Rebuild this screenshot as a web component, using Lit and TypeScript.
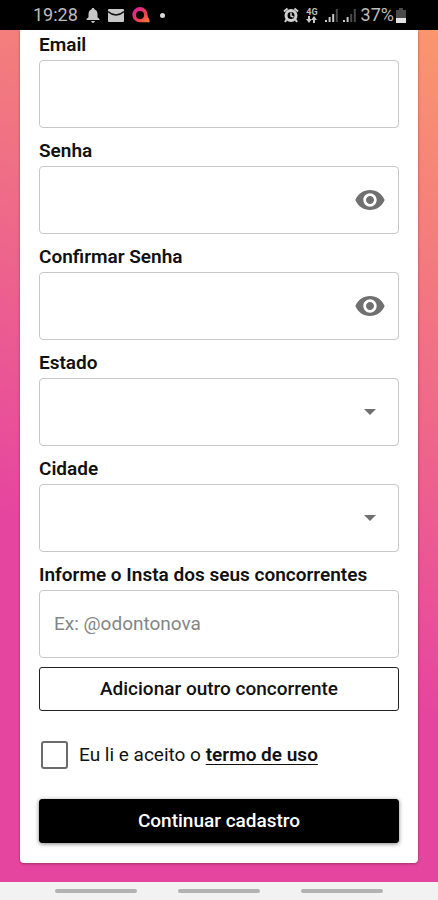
import { LitElement, html, css, svg } from "lit";
import { customElement, state } from "lit/decorators.js";

@customElement("status-bar")
class StatusBar extends LitElement {
  static styles = css`
    :host {
      display: flex;
      justify-content: space-between;
      align-items: center;
      height: 30px;
      padding: 0 32px 0 33px;
      background: #000;
      color: #bdbdbd;
      font-size: 18px;
      line-height: 30px;
    }
    .group {
      display: flex;
      align-items: center;
    }
    .left { gap: 8px; }
    .right { gap: 5px; }
    svg { display: block; }
    .network {
      display: flex;
      flex-direction: column;
      align-items: center;
      margin: 0 2px;
      font-size: 9px;
      font-weight: 700;
      line-height: 8px;
    }
    .dot {
      width: 5px;
      height: 5px;
      margin-left: 2px;
      border-radius: 50%;
      background: #d8d8d8;
    }
    .power {
      display: flex;
      align-items: center;
      gap: 2px;
    }
  `;

  private signal(level: number) {
    const heights = [2, 5, 8, 13];
    return html`<svg width="13" height="13" viewBox="0 0 13 13" aria-hidden="true">
      ${heights.map(
        (h, i) => svg`<rect x=${i * 3.6} y=${13 - h} width="2" height=${h} fill=${i < level ? "#c8c8c8" : "#4a4a4a"} />`
      )}
    </svg>`;
  }

  render() {
    return html`
      <div class="group left">
        <span>19:28</span>
        <svg width="14" height="16" viewBox="0 0 14 16" fill="#c8c8c8" aria-hidden="true">
          <path d="M7 1c.8 0 1.300.5 1.300 1.200C10.500 2.900 11.500 4.800 11.500 7v3.200L13.500 12v1H.5v-1l2-1.800V7c0-2.200 1-4.100 3.200-4.800C5.700 1.500 6.200 1 7 1zM5.200 14h3.600c0 1-.8 1.800-1.800 1.800S5.200 15 5.200 14z" />
        </svg>
        <svg width="16" height="13" viewBox="0 0 16 13" aria-hidden="true">
          <rect width="16" height="13" rx="1" fill="#c8c8c8" />
          <path d="M0 2.500C4.500 7 11.500 7 16 2.500" fill="none" stroke="#111" stroke-width="1.500" />
        </svg>
        <svg width="18" height="16" viewBox="0 0 18 16" fill="none" aria-hidden="true">
          <defs>
            <linearGradient id="ring" x1="0" y1="0" x2="1" y2="1">
              <stop offset="0.2" stop-color="#e0268a" />
              <stop offset="0.6" stop-color="#ef3f52" />
              <stop offset="1" stop-color="#f78a2c" />
            </linearGradient>
          </defs>
          <path fill="url(#ring)" fill-rule="evenodd" d="M8 0a7.500 7.500 0 0 1 7.500 7.500c0 1.700.4 2.900 1.700 4.500l.4 2.500c0 .5-.3.8-.8.8H8A7.600 7.600 0 0 1 8 0zM8 4a4 4 0 1 0 0 8a4 4 0 0 0 0-8z" />
        </svg>
        <span class="dot"></span>
      </div>
      <div class="group right">
        <svg width="16" height="16" viewBox="0 0 16 16" fill="none" stroke="#d0d0d0" aria-hidden="true">
          <circle cx="8" cy="8.500" r="5" stroke-width="3" />
          <path d="M1 4.500L4.500 1.500M15 4.500L11.500 1.500M3.500 12.500L2 15M12.500 12.500L14 15" stroke-width="2" />
          <path d="M8 5.500V9l2.500 1" stroke-width="1.500" />
        </svg>
        <span class="network">
          <span>4G</span>
          <svg width="11" height="7" viewBox="0 0 11 7" fill="#c8c8c8" aria-hidden="true">
            <path d="M2 0h2v3h2L3 7 0 3h2zM7 7h2V4h2L8 0 5 4h2z" />
          </svg>
        </span>
        ${this.signal(3)} ${this.signal(2)}
        <span class="power">
          <span>37%</span>
          <svg width="10" height="15" viewBox="0 0 10 15" aria-hidden="true">
            <path d="M3 0h4v2h3v13H0V2h3z" fill="#4a4a4a" />
            <path d="M0 10h10v5H0z" fill="#e4e4e4" />
          </svg>
        </span>
      </div>
    `;
  }
}

@customElement("app-root")
class AppRoot extends LitElement {
  @state() private visible: Record<string, boolean> = {};

  static styles = css`
    :host {
      display: flex;
      flex-direction: column;
      min-height: 100vh;
      font-family: Roboto, "Liberation Sans", sans-serif;
      color: #111;
    }
    * { box-sizing: border-box; }
    main {
      flex: 1;
      padding: 0 20px 19px;
      background: linear-gradient(205deg, #f9976d 0%, #e6459f 65%);
    }
    .card {
      display: flex;
      flex-direction: column;
      padding: 4px 19px 20px;
      border-radius: 0 0 4px 4px;
      background: #fff;
      box-shadow: 0 1px 3px rgba(0, 0, 0, 0.3);
    }
    .field {
      display: flex;
      flex-direction: column;
      gap: 4px;
      margin-bottom: 12px;
    }
    .field.last { margin-bottom: 9px; }
    .label {
      font-size: 19px;
      font-weight: 600;
      line-height: 22px;
    }
    .box {
      display: flex;
      align-items: center;
      height: 68px;
      border: 1px solid #c8c8c8;
      border-radius: 4px;
    }
    .input {
      flex: 1;
      min-width: 0;
      height: 100%;
      padding: 0 14px 2px;
      border: 0;
      outline: 0;
      background: transparent;
      color: inherit;
      font: inherit;
      font-size: 19px;
    }
    .input::placeholder {
      color: #858585;
      opacity: 1;
    }
    .eye {
      display: flex;
      margin-right: 12px;
      padding: 0;
      border: 0;
      background: none;
    }
    .select-box {
      display: grid;
      align-items: center;
    }
    .select-box > * { grid-area: 1 / 1; }
    .select {
      width: 100%;
      height: 100%;
      padding: 0 48px 0 14px;
      border: 0;
      outline: 0;
      appearance: none;
      background: transparent;
      color: inherit;
      font: inherit;
      font-size: 19px;
    }
    .arrow {
      justify-self: end;
      margin-right: 22px;
      pointer-events: none;
    }
    .button {
      height: 44px;
      padding: 0 0 2px;
      border: 1px solid #222;
      border-radius: 3px;
      background: #fff;
      color: #111;
      font: inherit;
      font-size: 19px;
      font-weight: 500;
    }
    .primary {
      border-color: #000;
      background: #000;
      color: #fff;
      box-shadow: 0 1px 4px rgba(0, 0, 0, 0.5);
    }
    .terms {
      display: flex;
      align-items: center;
      gap: 11px;
      margin: 30px 0;
      padding-left: 2px;
      font-size: 19px;
      line-height: 28px;
    }
    .check {
      flex: none;
      width: 27px;
      height: 28px;
      margin: 0;
      appearance: none;
      border: 2px solid #6c6c6c;
      border-radius: 3px;
      background: #fff;
    }
    .check:checked {
      background: #111;
    }
    .link {
      color: inherit;
      font-weight: 600;
      text-underline-offset: 3px;
    }
    .nav {
      display: flex;
      justify-content: center;
      align-items: center;
      gap: 41px;
      height: 18px;
      background: #f2f2f2;
    }
    .handle {
      width: 82px;
      height: 4px;
      border-radius: 2px;
      background: #b2b2b2;
    }
  `;

  private toggle(id: string) {
    this.visible = { ...this.visible, [id]: !this.visible[id] };
  }

  private password(id: string, label: string) {
    return html`<div class="field">
      <label class="label" for=${id}>${label}</label>
      <div class="box">
        <input class="input" id=${id} type=${this.visible[id] ? "text" : "password"} />
        <button class="eye" type="button" aria-label="Mostrar senha" @click=${() => this.toggle(id)}>
          <svg width="32" height="32" viewBox="0 0 24 24" fill="#707070" aria-hidden="true">
            <path d="M12 4.500C7 4.500 2.730 7.610 1 12c1.730 4.390 6 7.500 11 7.500s9.270-3.110 11-7.500c-1.730-4.390-6-7.500-11-7.500zM12 17c-2.760 0-5-2.240-5-5s2.240-5 5-5 5 2.240 5 5-2.240 5-5 5zm0-8c-1.660 0-3 1.340-3 3s1.340 3 3 3 3-1.340 3-3-1.340-3-3-3z" />
          </svg>
        </button>
      </div>
    </div>`;
  }

  private dropdown(id: string, label: string) {
    return html`<div class="field">
      <label class="label" for=${id}>${label}</label>
      <div class="box select-box">
        <select class="select" id=${id}>
          <option value=""></option>
        </select>
        <svg class="arrow" width="12" height="6" viewBox="0 0 12 6" fill="#707070" aria-hidden="true">
          <path d="M0 0h12L6 6z" />
        </svg>
      </div>
    </div>`;
  }

  render() {
    return html`
      <status-bar></status-bar>
      <main>
        <form class="card" @submit=${(e: Event) => e.preventDefault()}>
          <div class="field">
            <label class="label" for="email">Email</label>
            <div class="box"><input class="input" id="email" type="email" /></div>
          </div>
          ${this.password("senha", "Senha")}
          ${this.password("confirmar", "Confirmar Senha")}
          ${this.dropdown("estado", "Estado")}
          ${this.dropdown("cidade", "Cidade")}
          <div class="field last">
            <label class="label" for="insta">Informe o Insta dos seus concorrentes</label>
            <div class="box"><input class="input" id="insta" type="text" placeholder="Ex: @odontonova" /></div>
          </div>
          <button class="button" type="button">Adicionar outro concorrente</button>
          <div class="terms">
            <input class="check" id="aceite" type="checkbox" />
            <label for="aceite">Eu li e aceito o <a class="link" href="#termo">termo de uso</a></label>
          </div>
          <button class="button primary" type="submit">Continuar cadastro</button>
        </form>
      </main>
      <div class="nav" aria-hidden="true">
        <span class="handle"></span><span class="handle"></span><span class="handle"></span>
      </div>
    `;
  }
}
